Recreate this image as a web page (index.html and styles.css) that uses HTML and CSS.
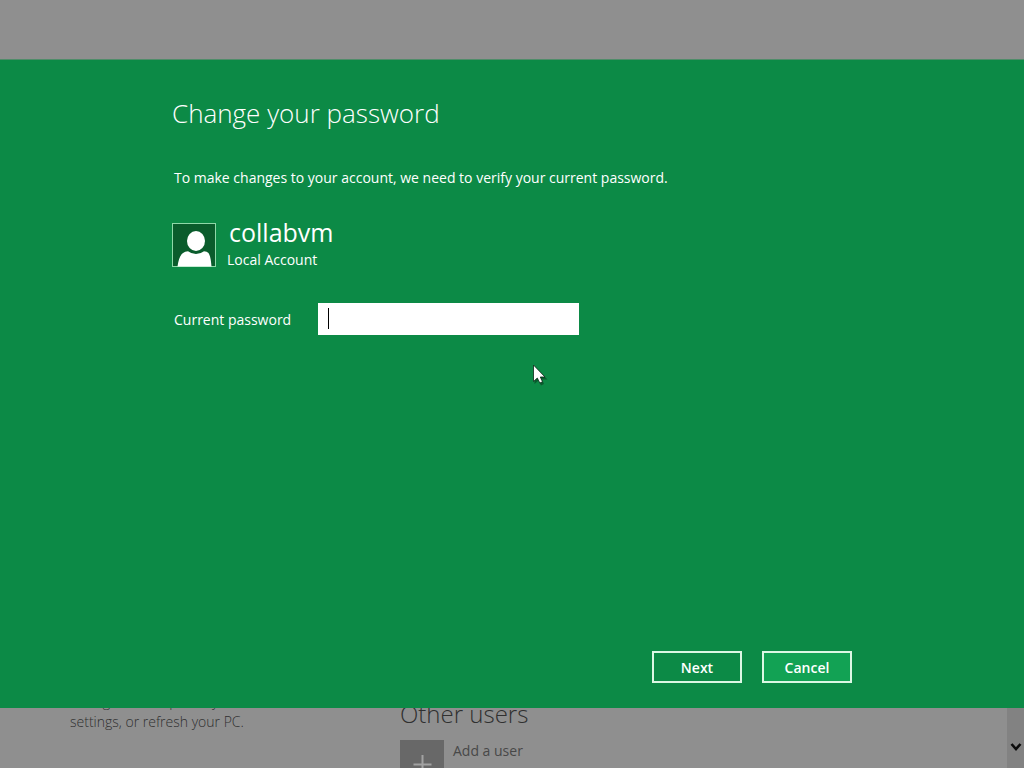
FILE: index.html
```html
<!DOCTYPE html>
<html lang="en">
<head>
<meta charset="utf-8">
<meta name="viewport" content="width=device-width, initial-scale=1">
<title>Change your password</title>
<link rel="stylesheet" href="styles.css">
</head>
<body>
<div class="top-strip"></div>
<main class="dialog">
  <h1 class="title">Change your password</h1>
  <p class="intro">To make changes to your account, we need to verify your current password.</p>
  <div class="account">
    <svg class="avatar" viewBox="0 0 44 44" aria-hidden="true">
      <rect x=".5" y=".5" width="43" height="43" fill="#0a5c2c" stroke="#8fd8a8"/>
      <path d="M5.500 43.500C6.500 37 8 32 11 30Q13 28.500 16 28.200Q24 34 32 28.200Q35 28.500 36.500 30C38.500 33 39 38 39.500 43.500Z" fill="#fff"/>
      <ellipse cx="24" cy="18" rx="9" ry="10" fill="#fff"/>
    </svg>
    <div class="who">
      <div class="name">collabvm</div>
      <div class="kind">Local Account</div>
    </div>
  </div>
  <form class="form">
    <div class="field">
      <label for="current">Current password</label>
      <div class="entry">
        <input id="current" type="password">
        <span class="caret"></span>
      </div>
    </div>
    <div class="actions">
      <button class="btn" type="submit">Next</button>
      <button class="btn btn-hot" type="button">Cancel</button>
    </div>
  </form>
</main>
<div class="behind">
  <p class="nav-text">Change or set up the sync<br>settings, or refresh your PC.</p>
  <section class="users">
    <h2 class="users-title">Other users</h2>
    <button class="add" type="button">
      <span class="plus"><svg viewBox="0 0 44 44" aria-hidden="true"><path d="M22.500 15V33M13.500 24.500H31.500" stroke="#a2a2a2" stroke-width="2"/></svg></span>
      <span>Add a user</span>
    </button>
  </section>
  <div class="scroll"><svg viewBox="0 0 12 9" aria-hidden="true"><path d="M1.500 2L6 7L10.500 2" fill="none" stroke="#0c0c0c" stroke-width="2.600"/></svg></div>
</div>
<svg class="pointer" viewBox="0 0 16 22" aria-hidden="true">
  <path d="M2.500 2V20L6.500 16.500L9 21.500L12 20L10 15.500H15.500Z" fill="#063d1c" opacity=".6"/>
  <path d="M1.500 1V17.500L5.300 14L7.800 19L10.500 17.800L8.300 13H13Z" fill="#fff" stroke="#0b2a18" stroke-width=".8"/>
</svg>
</body>
</html>
```
FILE: styles.css
```css
* {
  box-sizing: border-box;
}

body {
  margin: 0;
  height: 100vh;
  display: flex;
  flex-direction: column;
  overflow: hidden;
  background: #8f8f8f;
  color: #fff;
  font: 14px/20px "Open Sans", "Noto Sans", sans-serif;
}

h1, h2, p {
  margin: 0;
}

.top-strip {
  flex: 0 0 59px;
}

.dialog {
  flex: 1;
  display: flex;
  flex-direction: column;
  padding: 35px 172px 25px;
  background: #0c8a46;
  border-top: 1px solid #4f8c69;
}

.title {
  font-size: 26px;
  line-height: 36px;
  font-weight: 300;
}

.intro {
  margin-top: 37px;
  padding-left: 2px;
}

.account {
  display: flex;
  gap: 11px;
  margin-top: 27px;
}

.avatar {
  width: 44px;
  height: 44px;
  margin-top: 8px;
}

.name {
  padding-left: 2px;
  font-size: 25px;
  line-height: 35px;
}

.form {
  flex: 1;
  display: flex;
  flex-direction: column;
  justify-content: space-between;
  margin-top: 33px;
}

.field {
  display: flex;
  align-items: center;
}

.field label {
  width: 146px;
  padding: 2px 0 0 2px;
}

.entry {
  position: relative;
  width: 261px;
  height: 32px;
}

.entry input {
  width: 100%;
  height: 100%;
  padding: 4px 10px;
  border: 0;
  background: #fff;
  color: #000;
  font: inherit;
}

.caret {
  position: absolute;
  left: 10px;
  top: 5px;
  width: 1px;
  height: 21px;
  background: #000;
}

.actions {
  display: flex;
  justify-content: flex-end;
  gap: 20px;
}

.btn {
  width: 90px;
  height: 32px;
  padding: 2px 0 0;
  border: 2px solid #dcf8e4;
  background: transparent;
  color: #fff;
  font: inherit;
  font-weight: 600;
}

.btn-hot {
  background: #12a254;
}

.behind {
  flex: 0 0 60px;
  display: flex;
  padding-left: 70px;
  overflow: hidden;
  color: #484848;
}

.nav-text {
  flex: 0 0 330px;
  margin-top: -16px;
  color: #303030;
  font-weight: 300;
}

.users {
  flex: 1;
  margin-top: -11px;
}

.users-title {
  color: #303030;
  font-size: 24px;
  line-height: 34px;
  font-weight: 300;
}

.add {
  display: flex;
  gap: 9px;
  margin-top: 9px;
  padding: 0;
  border: 0;
  background: none;
  color: inherit;
  font: inherit;
  line-height: 22px;
}

.plus {
  width: 44px;
  height: 44px;
  background: #686868;
}

.scroll {
  width: 17px;
  padding: 34px 2px 0 3px;
  background: #828282;
}

.scroll svg {
  display: block;
  width: 12px;
  height: 9px;
}

.pointer {
  position: absolute;
  left: 532px;
  top: 364px;
  width: 16px;
  height: 22px;
}
```
